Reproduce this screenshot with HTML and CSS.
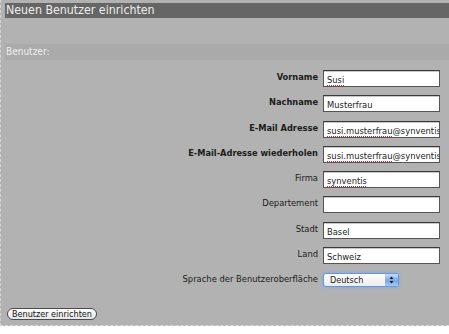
FILE: index.html
```html
<!DOCTYPE html>
<html lang="de">
<head>
    <meta charset="UTF-8">
    <meta name="viewport" content="width=device-width, initial-scale=1.0">
    <title>Neuen Benutzer einrichten</title>
    <link rel="stylesheet" href="styles.css">
</head>
<body>
    <div class="panel">
        <div class="title">Neuen Benutzer einrichten</div>

        <div class="section">Benutzer:</div>

        <div class="form">
            <label class="label strong">Vorname</label>
            <div class="field"><span class="typo">Susi</span></div>

            <label class="label strong">Nachname</label>
            <div class="field">Musterfrau</div>

            <label class="label strong">E-Mail Adresse</label>
            <div class="field"><span class="typo">susi.musterfrau</span>@synventis</div>

            <label class="label strong">E-Mail-Adresse wiederholen</label>
            <div class="field"><span class="typo">susi.musterfrau</span>@synventis</div>

            <label class="label">Firma</label>
            <div class="field"><span class="typo">synventis</span></div>

            <label class="label">Departement</label>
            <div class="field"></div>

            <label class="label">Stadt</label>
            <div class="field">Basel</div>

            <label class="label">Land</label>
            <div class="field">Schweiz</div>

            <label class="label">Sprache der Benutzeroberfläche</label>
            <div class="select">
                <span>Deutsch</span>
                <span class="select-arrows">
                    <svg width="5" height="8" viewBox="0 0 5 8">
                        <path d="M0.5 3 L2.5 0.5 L4.5 3 Z M0.5 5 L2.5 7.5 L4.5 5 Z" fill="#1a1a1a"/>
                    </svg>
                </span>
            </div>
        </div>

        <button class="button">Benutzer einrichten</button>
    </div>
</body>
</html>
```

FILE: styles.css
```css
body {
    margin: 0;
    background-color: #ffffff;
    font-family: 'DejaVu Sans Condensed', 'DejaVu Sans', sans-serif;
}

.panel {
    background-color: #b2b2b2;
    border-left: 1px dashed #d4d4d4;
    border-bottom: 1px dashed #d8d8d8;
    padding: 3px 0 5px 4px;
}

.title {
    background-color: #666666;
    color: #eeeeee;
    font-size: 12.3px;
    height: 15px;
    line-height: 15px;
    padding-left: 1px;
}

.section {
    background-color: #aaaaaa;
    color: #eeeeee;
    font-size: 10px;
    height: 16px;
    line-height: 16px;
    padding-left: 1px;
    margin-top: 26px;
}

.form {
    display: grid;
    grid-template-columns: 1fr 117px;
    column-gap: 5px;
    row-gap: 8.3px;
    margin-top: 10px;
    padding-right: 9px;
}

.label {
    font-size: 9.3px;
    color: #1a1a1a;
    text-align: right;
    line-height: 12px;
    padding-top: 1px;
}

.label.strong {
    font-size: 9.2px;
    font-weight: bold;
}

.field {
    height: 17px;
    box-sizing: border-box;
    background-color: #ffffff;
    border: 1px solid #555555;
    border-top-color: #3a3a3a;
    box-shadow: inset 0 1px 0 #c8c8c8;
    font-size: 9.3px;
    line-height: 15px;
    padding: 1px 0 0 3px;
    color: #222222;
    white-space: nowrap;
    overflow: hidden;
}

.typo {
    text-decoration: underline dotted #e02020;
    text-decoration-thickness: 1px;
    text-underline-offset: 2px;
}

.select {
    width: 76px;
    height: 14px;
    box-sizing: border-box;
    display: flex;
    align-items: center;
    justify-content: space-between;
    border: 1px solid #6d95d4;
    border-radius: 3px;
    box-shadow: 0 0 2px 1px #86aee8;
    background: linear-gradient(#ffffff, #ececec);
    font-size: 9px;
    color: #222222;
    padding-left: 6px;
    margin-top: 0.7px;
}

.select-arrows {
    width: 13px;
    height: 12px;
    display: flex;
    align-items: center;
    justify-content: center;
    border-radius: 0 2px 2px 0;
    background: linear-gradient(#c9dcf6, #7aa6e6 55%, #a8c8f2);
}

.button {
    display: block;
    margin-top: 21px;
    margin-left: 2px;
    height: 12px;
    padding: 0 4px;
    border: 1px solid #4a4a4a;
    border-radius: 7px;
    background: linear-gradient(#ffffff, #e6e6e6);
    font-family: 'DejaVu Sans Condensed', 'DejaVu Sans', sans-serif;
    font-size: 9px;
    line-height: 10px;
    color: #111111;
}
```
